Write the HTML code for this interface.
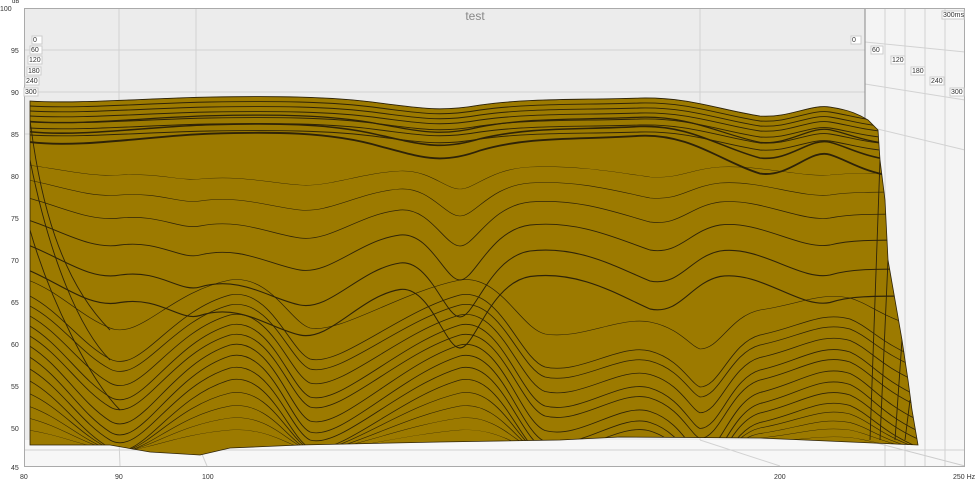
<!DOCTYPE html><html><head><style>
body{margin:0;background:#fff;width:975px;height:482px;overflow:hidden;font-family:"Liberation Sans",sans-serif}
svg text{font-family:"Liberation Sans",sans-serif;font-size:7px;fill:#333}
</style></head><body>
<svg width="975" height="482" viewBox="0 0 975 482" xmlns="http://www.w3.org/2000/svg">
<defs>
<clipPath id="cp"><path id="shape" d="M30,101 C80,104 150,98 210,97 C270,96 330,96 380,103 C420,108 440,112 480,105 C530,98 580,100 640,98 C690,97 720,110 760,116 C790,118 810,104 830,107 C850,110 860,115 868,120 L878,130 L880,160 L885,200 L888,260 L895,300 L902,340 L908,380 L912,410 L918,445 L760,438 L620,437 L560,440 L440,442 L300,445 L230,448 L200,455 L150,452 L110,445 L30,445 Z"/></clipPath>
<path id="t" d="M30,101 C80,104 150,98 210,97 C270,96 330,96 380,103 C420,108 440,112 480,105 C530,98 580,100 640,98 C690,97 720,110 760,116 C790,118 810,104 830,107 C850,110 860,115 900,118" fill="none"/>
<path id="b" d="M28,0 C60,10 90,30 120,25 C160,20 180,40 200,35 C240,25 270,45 300,50 C330,55 360,20 400,15 C430,12 445,60 460,60 C475,60 490,10 530,5 C580,0 620,20 650,30 C680,35 690,10 720,5 C760,0 800,30 830,25 C850,20 870,20 920,20" fill="none"/>
<path id="c" d="M28,0 C60,20 80,60 110,80 C140,100 170,20 230,0 C270,-10 290,70 310,80 C340,90 400,20 460,0 C500,-10 520,80 545,90 C580,100 620,60 650,70 C680,80 690,110 700,115 C720,115 730,60 760,50 C800,40 820,20 850,30 C870,40 880,60 920,80" fill="none"/>
</defs>
<rect x="24" y="8" width="841" height="458" fill="#ececec"/>
<polygon points="865,8 965,8 965,466 865,466" fill="#f4f4f4"/>
<rect x="24" y="440" width="941" height="26" fill="#f7f7f7"/>
<g stroke="#d2d2d2" stroke-width="1" fill="none">
<line x1="24" y1="50" x2="865" y2="50"/><line x1="24" y1="92" x2="865" y2="92"/><line x1="24" y1="134" x2="865" y2="134"/>
<line x1="119" y1="8" x2="119" y2="440"/><line x1="196" y1="8" x2="196" y2="440"/><line x1="700" y1="8" x2="700" y2="440"/>
<line x1="885" y1="8" x2="885" y2="466"/><line x1="905" y1="8" x2="905" y2="466"/><line x1="925" y1="8" x2="925" y2="466"/><line x1="945" y1="8" x2="945" y2="466"/>
<line x1="865" y1="42" x2="965" y2="52"/><line x1="865" y1="84" x2="965" y2="100"/><line x1="865" y1="126" x2="965" y2="150"/>
<line x1="119" y1="440" x2="120" y2="466"/><line x1="196" y1="440" x2="207" y2="466"/><line x1="700" y1="440" x2="780" y2="466"/>
<line x1="24" y1="450" x2="965" y2="450"/>
</g>
<line x1="865" y1="8" x2="865" y2="118" stroke="#888"/>
<line x1="865" y1="440" x2="965" y2="466" stroke="#ccc"/>
<rect x="24.5" y="8.5" width="940" height="458" fill="none" stroke="#aaa"/>
<text x="475" y="20" style="font-size:12px;fill:#888" text-anchor="middle">test</text>
<use href="#shape" fill="#9c7a00"/>
<g clip-path="url(#cp)" stroke="#2e2308" stroke-width="0.9" fill="none">
<use href="#t"/>
<use href="#t" transform="translate(0,5)"/><use href="#t" transform="translate(0,10)"/><use href="#t" transform="translate(0,15)"/>
<use href="#t" transform="translate(0,21)"/><use href="#t" transform="translate(0,27)"/><use href="#t" transform="translate(0,34)"/>
<use href="#t" transform="translate(0,-20) scale(1,1.4)"/><use href="#t" transform="translate(0,-45) scale(1,1.75)"/>
<use href="#t" transform="translate(0,-70) scale(1,2.1)"/>
<use href="#b" transform="translate(0,165) scale(1,0.4)"/><use href="#b" transform="translate(0,180) scale(1,0.6)"/>
<use href="#b" transform="translate(0,198) scale(1,0.8)"/><use href="#b" transform="translate(0,220) scale(1,1)"/>
<use href="#b" transform="translate(0,245) scale(1,1.2)"/><use href="#b" transform="translate(0,270) scale(1,1.3)"/>
<use href="#c" transform="translate(0,280) scale(1,0.6)"/><use href="#c" transform="translate(0,295) scale(1,0.8)"/>
<use href="#c" transform="translate(0,305) scale(1,0.8)"/><use href="#c" transform="translate(0,315) scale(1,0.85)"/>
<use href="#c" transform="translate(0,325) scale(1,0.9)"/><use href="#c" transform="translate(0,335) scale(1,0.9)"/>
<use href="#c" transform="translate(0,345) scale(1,0.95)"/><use href="#c" transform="translate(0,356) scale(1,0.95)"/>
<use href="#c" transform="translate(0,368) scale(1,0.9)"/><use href="#c" transform="translate(0,380) scale(1,0.85)"/>
<use href="#c" transform="translate(0,393) scale(1,0.7)"/><use href="#c" transform="translate(0,406) scale(1,0.55)"/>
<use href="#c" transform="translate(0,418) scale(1,0.4)"/><use href="#c" transform="translate(0,430) scale(1,0.25)"/>
<path d="M30,120 C40,200 60,280 110,330 M30,160 C50,260 80,330 110,360 M30,230 C50,300 90,380 120,410"/>
<path d="M880,160 L870,440 M888,260 L880,440 M902,340 L895,440 M910,400 L905,440"/>
</g>
<use href="#shape" fill="none" stroke="#2e2308" stroke-width="0.8"/>
<g>
<text x="0" y="11">100</text><text x="12" y="3" style="font-size:6px">dB</text>
<text x="11" y="53">95</text><text x="11" y="95">90</text><text x="11" y="137">85</text><text x="11" y="179">80</text>
<text x="11" y="221">75</text><text x="11" y="263">70</text><text x="11" y="305">65</text><text x="11" y="347">60</text>
<text x="11" y="389">55</text><text x="11" y="431">50</text><text x="11" y="470">45</text>
<text x="20" y="479">80</text><text x="115" y="479">90</text><text x="202" y="479">100</text><text x="774" y="479">200</text><text x="953" y="479">250 Hz</text>
</g>
<g style="font-size:6px">
<rect x="32" y="36" width="10" height="8" fill="#fff" stroke="#ccc"/><text x="33" y="42">0</text>
<rect x="30" y="46" width="12" height="8" fill="#fff" stroke="#ccc"/><text x="31" y="52">60</text>
<rect x="28" y="56" width="14" height="8" fill="#fff" stroke="#ccc"/><text x="29" y="62">120</text>
<rect x="27" y="67" width="14" height="8" fill="#fff" stroke="#ccc"/><text x="28" y="73">180</text>
<rect x="25" y="77" width="14" height="8" fill="#fff" stroke="#ccc"/><text x="26" y="83">240</text>
<rect x="24" y="88" width="14" height="8" fill="#fff" stroke="#ccc"/><text x="25" y="94">300</text>
<rect x="851" y="36" width="10" height="8" fill="#fff" stroke="#ccc"/><text x="852" y="42">0</text>
<rect x="871" y="46" width="12" height="8" fill="#fff" stroke="#ccc"/><text x="872" y="52">60</text>
<rect x="891" y="56" width="14" height="8" fill="#fff" stroke="#ccc"/><text x="892" y="62">120</text>
<rect x="911" y="67" width="14" height="8" fill="#fff" stroke="#ccc"/><text x="912" y="73">180</text>
<rect x="930" y="77" width="14" height="8" fill="#fff" stroke="#ccc"/><text x="931" y="83">240</text>
<rect x="950" y="88" width="14" height="8" fill="#fff" stroke="#ccc"/><text x="951" y="94">300</text>
<rect x="942" y="11" width="22" height="8" fill="#fff" stroke="#ccc"/><text x="943" y="17">300ms</text>
</g>
</svg>
</body></html>
